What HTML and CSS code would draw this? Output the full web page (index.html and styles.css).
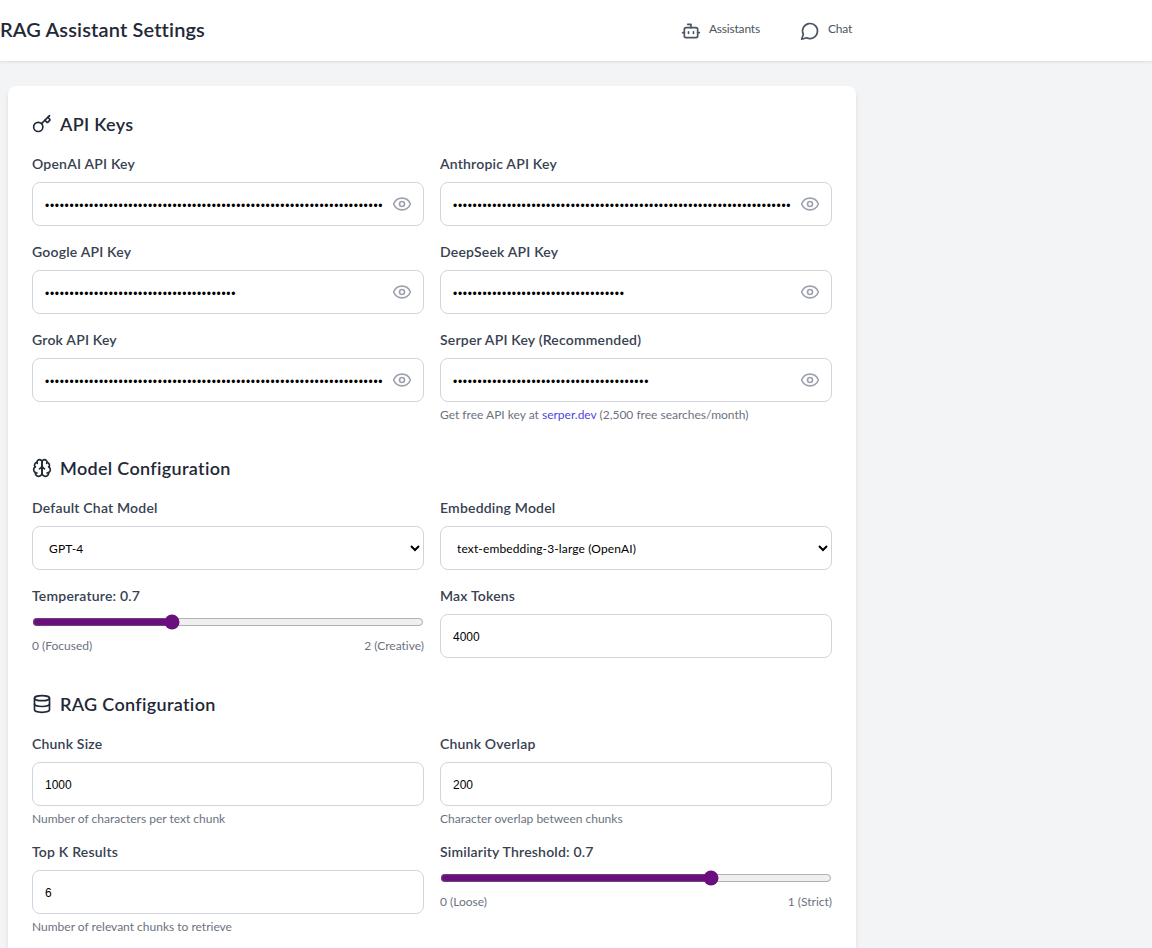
FILE: index.html
```html
<!DOCTYPE html>
<html lang="en">
<head>
    <meta charset="UTF-8">
    <meta name="viewport" content="width=device-width, initial-scale=1.0">
    <title>RAG Assistant Settings</title>
    <link rel="stylesheet" href="styles.css">
</head>
<body>
    <header class="topbar">
        <div class="topbar-inner">
            <h1>RAG Assistant Settings</h1>
            <nav class="nav">
                <a class="nav-link" href="#">
                    <svg class="icon" viewBox="0 0 24 24"><path d="M12 8V4H8"/><rect width="16" height="12" x="4" y="8" rx="2"/><path d="M2 14h2"/><path d="M20 14h2"/><path d="M15 13v2"/><path d="M9 13v2"/></svg>
                    <span>Assistants</span>
                </a>
                <a class="nav-link" href="#">
                    <svg class="icon" viewBox="0 0 24 24"><path d="M7.9 20A9 9 0 1 0 4 16.1L2 22Z"/></svg>
                    <span>Chat</span>
                </a>
            </nav>
        </div>
    </header>

    <main class="container">
        <form class="card">
            <section class="section">
                <h2><svg class="icon" viewBox="0 0 24 24"><path d="m15.5 7.5 2.3 2.3a1 1 0 0 0 1.4 0l2.1-2.1a1 1 0 0 0 0-1.4L19 4"/><path d="m21 2-9.6 9.6"/><circle cx="7.5" cy="15.5" r="5.5"/></svg>API Keys</h2>
                <div class="grid">
                    <div class="field">
                        <label for="openai">OpenAI API Key</label>
                        <div class="secret">
                            <input type="password" id="openai" value="sk-proj-a81f0c2e77d94b3fa6105ce8d2b94f7713ae60c9d8f24b17ce05a3b96d7e128f4c">
                            <svg class="icon eye" viewBox="0 0 24 24"><path d="M2.062 12.348a1 1 0 0 1 0-.696 10.75 10.75 0 0 1 19.876 0 1 1 0 0 1 0 .696 10.75 10.75 0 0 1-19.876 0"/><circle cx="12" cy="12" r="3"/></svg>
                        </div>
                    </div>
                    <div class="field">
                        <label for="anthropic">Anthropic API Key</label>
                        <div class="secret">
                            <input type="password" id="anthropic" value="sk-ant-api03-5e21c7d08ab64f39b1de70c4a9f2683bd517ce0492fa6d83b7c1e05d94a2">
                            <svg class="icon eye" viewBox="0 0 24 24"><path d="M2.062 12.348a1 1 0 0 1 0-.696 10.75 10.75 0 0 1 19.876 0 1 1 0 0 1 0 .696 10.75 10.75 0 0 1-19.876 0"/><circle cx="12" cy="12" r="3"/></svg>
                        </div>
                    </div>
                    <div class="field">
                        <label for="google">Google API Key</label>
                        <div class="secret">
                            <input type="password" id="google" value="AIzaSyB7c1e05d94a2e21c7d08ab64f39b1de70">
                            <svg class="icon eye" viewBox="0 0 24 24"><path d="M2.062 12.348a1 1 0 0 1 0-.696 10.75 10.75 0 0 1 19.876 0 1 1 0 0 1 0 .696 10.75 10.75 0 0 1-19.876 0"/><circle cx="12" cy="12" r="3"/></svg>
                        </div>
                    </div>
                    <div class="field">
                        <label for="deepseek">DeepSeek API Key</label>
                        <div class="secret">
                            <input type="password" id="deepseek" value="sk-4f39b1de70c4a9f2683bd517ce0492fa">
                            <svg class="icon eye" viewBox="0 0 24 24"><path d="M2.062 12.348a1 1 0 0 1 0-.696 10.75 10.75 0 0 1 19.876 0 1 1 0 0 1 0 .696 10.75 10.75 0 0 1-19.876 0"/><circle cx="12" cy="12" r="3"/></svg>
                        </div>
                    </div>
                    <div class="field">
                        <label for="grok">Grok API Key</label>
                        <div class="secret">
                            <input type="password" id="grok" value="xai-a81f0c2e77d94b3fa6105ce8d2b94f7713ae60c9d8f24b17ce05a3b96d7e128f4c0d">
                            <svg class="icon eye" viewBox="0 0 24 24"><path d="M2.062 12.348a1 1 0 0 1 0-.696 10.75 10.75 0 0 1 19.876 0 1 1 0 0 1 0 .696 10.75 10.75 0 0 1-19.876 0"/><circle cx="12" cy="12" r="3"/></svg>
                        </div>
                    </div>
                    <div class="field">
                        <label for="serper">Serper API Key (Recommended)</label>
                        <div class="secret">
                            <input type="password" id="serper" value="d94a2e21c7d08ab64f39b1de70c4a9f2683bd517">
                            <svg class="icon eye" viewBox="0 0 24 24"><path d="M2.062 12.348a1 1 0 0 1 0-.696 10.75 10.75 0 0 1 19.876 0 1 1 0 0 1 0 .696 10.75 10.75 0 0 1-19.876 0"/><circle cx="12" cy="12" r="3"/></svg>
                        </div>
                        <p class="help">Get free API key at <a href="#">serper.dev</a> (2,500 free searches/month)</p>
                    </div>
                </div>
            </section>

            <section class="section">
                <h2><svg class="icon" viewBox="0 0 24 24"><path d="M12 5a3 3 0 1 0-5.997.125 4 4 0 0 0-2.526 5.77 4 4 0 0 0 .556 6.588A4 4 0 1 0 12 18Z"/><path d="M12 5a3 3 0 1 1 5.997.125 4 4 0 0 1 2.526 5.77 4 4 0 0 1-.556 6.588A4 4 0 1 1 12 18Z"/><path d="M15 13a4.5 4.5 0 0 1-3-4 4.5 4.5 0 0 1-3 4"/><path d="M17.599 6.5a3 3 0 0 0 .399-1.375"/><path d="M6.003 5.125A3 3 0 0 0 6.401 6.5"/><path d="M3.477 10.896a4 4 0 0 1 .585-.396"/><path d="M19.938 10.5a4 4 0 0 1 .585.396"/><path d="M6 18a4 4 0 0 1-1.967-.516"/><path d="M19.967 17.484A4 4 0 0 1 18 18"/></svg>Model Configuration</h2>
                <div class="grid">
                    <div class="field">
                        <label for="chatModel">Default Chat Model</label>
                        <select id="chatModel">
                            <option>GPT-4</option>
                            <option>GPT-3.5 Turbo</option>
                            <option>Claude 3 Opus</option>
                        </select>
                    </div>
                    <div class="field">
                        <label for="embedModel">Embedding Model</label>
                        <select id="embedModel">
                            <option>text-embedding-3-large (OpenAI)</option>
                            <option>text-embedding-3-small (OpenAI)</option>
                        </select>
                    </div>
                    <div class="field">
                        <label for="temperature">Temperature: 0.7</label>
                        <input type="range" id="temperature" min="0" max="2" step="0.1" value="0.7">
                        <div class="scale"><span>0 (Focused)</span><span>2 (Creative)</span></div>
                    </div>
                    <div class="field">
                        <label for="maxTokens">Max Tokens</label>
                        <input type="number" id="maxTokens" value="4000">
                    </div>
                </div>
            </section>

            <section class="section">
                <h2><svg class="icon" viewBox="0 0 24 24"><ellipse cx="12" cy="5" rx="9" ry="3"/><path d="M3 5V19A9 3 0 0 0 21 19V5"/><path d="M3 12A9 3 0 0 0 21 12"/></svg>RAG Configuration</h2>
                <div class="grid">
                    <div class="field">
                        <label for="chunkSize">Chunk Size</label>
                        <input type="number" id="chunkSize" value="1000">
                        <p class="help">Number of characters per text chunk</p>
                    </div>
                    <div class="field">
                        <label for="chunkOverlap">Chunk Overlap</label>
                        <input type="number" id="chunkOverlap" value="200">
                        <p class="help">Character overlap between chunks</p>
                    </div>
                    <div class="field">
                        <label for="topK">Top K Results</label>
                        <input type="number" id="topK" value="6">
                        <p class="help">Number of relevant chunks to retrieve</p>
                    </div>
                    <div class="field">
                        <label for="similarity">Similarity Threshold: 0.7</label>
                        <input type="range" id="similarity" min="0" max="1" step="0.1" value="0.7">
                        <div class="scale"><span>0 (Loose)</span><span>1 (Strict)</span></div>
                    </div>
                </div>
            </section>
        </form>
    </main>
</body>
</html>
```

FILE: styles.css
```css
* {
    box-sizing: border-box;
}
html, body {
    height: 100%;
}
body {
    font-family: Lato, "Liberation Sans", sans-serif;
    font-variant-ligatures: none;
    background-color: #f3f4f6;
    color: #1f2937;
    margin: 0;
    overflow: hidden;
}
.icon {
    width: 20px;
    height: 20px;
    flex-shrink: 0;
    fill: none;
    stroke: currentColor;
    stroke-width: 2;
    stroke-linecap: round;
    stroke-linejoin: round;
}
.topbar {
    background: white;
    height: 61px;
    box-shadow: 0 1px 3px rgba(0, 0, 0, 0.1);
}
.topbar-inner {
    width: 864px;
    height: 100%;
    display: flex;
    align-items: center;
    justify-content: space-between;
}
h1 {
    font-size: 20px;
    line-height: 28px;
    font-weight: 600;
    letter-spacing: 0.14px;
    margin: 0 0 3px;
}
.nav {
    display: flex;
    gap: 16px;
}
.nav-link {
    display: flex;
    align-items: center;
    gap: 8px;
    padding: 0 12px;
    font-size: 12px;
    letter-spacing: -0.2px;
    color: #4b5563;
    text-decoration: none;
}
.nav-link span {
    margin-bottom: 4px;
}
.container {
    width: 864px;
    padding: 25px 8px 0;
}
.card {
    background: white;
    padding: 24px;
    border-radius: 8px;
    box-shadow: 0 4px 6px -1px rgba(0, 0, 0, 0.1), 0 2px 4px -2px rgba(0, 0, 0, 0.1);
}
.section {
    margin-bottom: 32px;
}
h2 {
    display: flex;
    align-items: center;
    gap: 8px;
    font-size: 18px;
    line-height: 28px;
    font-weight: 600;
    letter-spacing: 0.32px;
    margin: 0 0 16px;
}
.grid {
    display: grid;
    grid-template-columns: 1fr 1fr;
    gap: 16px;
}
.field label {
    display: block;
    font-size: 14px;
    line-height: 20px;
    font-weight: 600;
    letter-spacing: 0.2px;
    color: #374151;
    margin-bottom: 8px;
}
input, select {
    font-family: inherit;
    font-size: 12px;
    color: black;
}
input[type="password"], input[type="number"], select {
    display: block;
    width: 100%;
    height: 44px;
    padding: 0 12px;
    background: white;
    border: 1px solid #d1d5db;
    border-radius: 8px;
}
input[type="number"] {
    appearance: textfield;
    font-family: "Liberation Sans", sans-serif;
    padding-top: 2px;
}
input[type="password"] {
    font-family: "Liberation Sans", sans-serif;
    letter-spacing: 0.7px;
    padding-top: 4px;
}
select {
    letter-spacing: 0.13px;
}
input[type="range"] {
    display: block;
    width: 100%;
    height: 16px;
    margin: 0;
    accent-color: #6b0f7f;
}
.secret {
    position: relative;
}
.secret input {
    padding-right: 40px;
}
.eye {
    position: absolute;
    right: 12px;
    top: 12px;
    color: #9ca3af;
}
.help {
    font-size: 12px;
    line-height: 16px;
    color: #6b7280;
    margin: 5px 0 -1px;
}
.help a {
    color: #4f46e5;
    text-decoration: none;
}
.scale {
    display: flex;
    justify-content: space-between;
    font-size: 12px;
    line-height: 16px;
    color: #6b7280;
    margin-top: 8px;
}
```
